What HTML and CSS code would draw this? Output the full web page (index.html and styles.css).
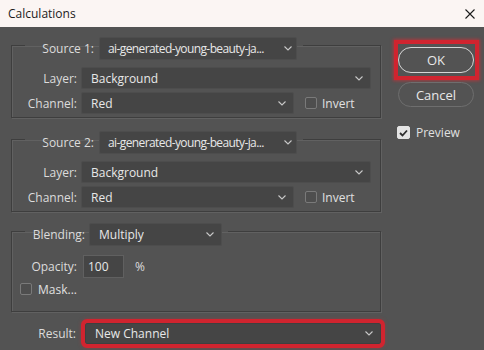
FILE: index.html
```html
<!DOCTYPE html>
<html>
<head>
<meta charset="utf-8">
<title>Calculations</title>
<link rel="stylesheet" href="styles.css">
</head>
<body>
<div class="titlebar">
  <span class="title">Calculations</span>
  <svg class="close" width="10" height="10" viewBox="0 0 10 10"><path d="M0.5 0.5 L9.5 9.5 M9.5 0.5 L0.5 9.5" stroke="#1b1b1b" stroke-width="1.1" fill="none"/></svg>
</div>
<div class="main">
  <div class="left">
    <fieldset class="group">
      <legend class="legend">
        <span class="lbl lbl-src">Source 1:</span>
        <div class="select sel-src"><span class="val">ai-generated-young-beauty-ja...</span><svg class="chev" width="8" height="5" viewBox="0 0 8 5"><path d="M0.5 0.5 L4 4 L7.5 0.5" stroke="#c9c9c9" stroke-width="1.1" fill="none"/></svg></div>
      </legend>
      <div class="row">
        <span class="lbl">Layer:</span>
        <div class="select sel-wide"><span class="val">Background</span><svg class="chev" width="8" height="5" viewBox="0 0 8 5"><path d="M0.5 0.5 L4 4 L7.5 0.5" stroke="#c9c9c9" stroke-width="1.1" fill="none"/></svg></div>
      </div>
      <div class="row">
        <span class="lbl">Channel:</span>
        <div class="select sel-ch"><span class="val">Red</span><svg class="chev" width="8" height="5" viewBox="0 0 8 5"><path d="M0.5 0.5 L4 4 L7.5 0.5" stroke="#c9c9c9" stroke-width="1.1" fill="none"/></svg></div>
        <span class="check inv"></span><span class="ctext">Invert</span>
      </div>
    </fieldset>
    <fieldset class="group">
      <legend class="legend">
        <span class="lbl lbl-src">Source 2:</span>
        <div class="select sel-src"><span class="val">ai-generated-young-beauty-ja...</span><svg class="chev" width="8" height="5" viewBox="0 0 8 5"><path d="M0.5 0.5 L4 4 L7.5 0.5" stroke="#c9c9c9" stroke-width="1.1" fill="none"/></svg></div>
      </legend>
      <div class="row">
        <span class="lbl">Layer:</span>
        <div class="select sel-wide"><span class="val">Background</span><svg class="chev" width="8" height="5" viewBox="0 0 8 5"><path d="M0.5 0.5 L4 4 L7.5 0.5" stroke="#c9c9c9" stroke-width="1.1" fill="none"/></svg></div>
      </div>
      <div class="row">
        <span class="lbl">Channel:</span>
        <div class="select sel-ch"><span class="val">Red</span><svg class="chev" width="8" height="5" viewBox="0 0 8 5"><path d="M0.5 0.5 L4 4 L7.5 0.5" stroke="#c9c9c9" stroke-width="1.1" fill="none"/></svg></div>
        <span class="check inv"></span><span class="ctext">Invert</span>
      </div>
    </fieldset>
    <fieldset class="group g3">
      <legend class="legend">
        <span class="lbl lbl-blend">Blending:</span>
        <div class="select sel-blend"><span class="val">Multiply</span><svg class="chev" width="8" height="5" viewBox="0 0 8 5"><path d="M0.5 0.5 L4 4 L7.5 0.5" stroke="#c9c9c9" stroke-width="1.1" fill="none"/></svg></div>
      </legend>
      <div class="row row-op">
        <span class="lbl">Opacity:</span>
        <div class="input">100</div>
        <span class="pct">%</span>
      </div>
      <div class="row row-mask">
        <span class="check mask"></span><span class="ctext">Mask...</span>
      </div>
    </fieldset>
    <div class="row row-result">
      <span class="lbl">Result:</span>
      <div class="select sel-result"><span class="val">New Channel</span><svg class="chev" width="8" height="5" viewBox="0 0 8 5"><path d="M0.5 0.5 L4 4 L7.5 0.5" stroke="#c9c9c9" stroke-width="1.1" fill="none"/></svg></div>
    </div>
  </div>
  <div class="right">
    <div class="okwrap"><div class="btn ok">OK</div></div>
    <div class="btn cancel">Cancel</div>
    <div class="preview"><span class="check checked"><svg width="9" height="8" viewBox="0 0 9 8"><path d="M1 4 L3.5 6.5 L8 1.5" stroke="#2e2e2e" stroke-width="1.8" fill="none"/></svg></span><span class="ctext">Preview</span></div>
  </div>
</div>
</body>
</html>
```

FILE: styles.css
```css
* { box-sizing: border-box; }
html, body { margin: 0; padding: 0; }
body {
  width: 484px;
  height: 350px;
  overflow: hidden;
  background: #535353;
  font-family: "Open Sans", "Noto Sans", sans-serif;
  font-size: 12px;
  color: #dcdcdc;
  white-space: nowrap;
}
.titlebar {
  height: 27px;
  background: #fbf5f3;
  display: flex;
  align-items: center;
  justify-content: space-between;
  padding: 0 9px 0 8px;
  color: #1b1b1b;
}
.title { font-size: 12px; }
.close { display: block; }

.main { display: flex; }
.left { width: 385px; padding-left: 11px; flex: none; }

.group {
  width: 370px;
  min-width: 0;
  margin: 4px 0 0 0;
  padding: 7px 8px 3px 0;
  border: 1px solid #3e3e3e;
  box-shadow: 1px 1px 0 #616161, inset 1px 1px 0 #616161;
}
.group + .group { margin-top: 7px; }
.g3 { margin-top: 5px !important; padding-top: 9px; padding-bottom: 15px; }

.legend {
  display: flex;
  align-items: center;
  padding: 6px 6px 0 0;
  margin-left: 13px;
}
.lbl { text-align: right; flex: none; }
.lbl-src { width: 69px; margin-right: 5px; }
.lbl-blend { width: 60px; margin-right: 4px; }

.select {
  height: 23px;
  background: #454545;
  border: 1px solid #4d4d4d;
  border-radius: 2px;
  display: flex;
  align-items: center;
  justify-content: space-between;
  padding: 0 7px 0 9px;
  color: #e8e8e8;
  flex: none;
}
.val { overflow: hidden; min-width: 0; }
.chev { flex: none; }
.sel-src { width: 198px; padding: 0 4px 0 8px; }
.sel-src .val { letter-spacing: -0.6px; overflow: visible; }
.sel-blend { width: 133px; }
.sel-wide { width: 290px; height: 22px; }
.sel-ch { width: 213px; height: 22px; }

.row { display: flex; align-items: center; height: 22px; }
.row + .row { margin-top: 3px; }
.row .lbl { width: 65px; margin-right: 4px; }

.check {
  width: 12px;
  height: 12px;
  border: 1px solid #7a7a7a;
  border-radius: 2px;
  background: #4e4e4e;
  flex: none;
  display: flex;
  align-items: center;
  justify-content: center;
}
.inv { margin-left: 11px; }
.ctext { margin-left: 5px; color: #e0e0e0; }

.row-op { height: 23px; }
.row-op .lbl { margin-right: 6px; }
.input {
  width: 41px;
  height: 23px;
  background: #454545;
  border: 1px solid #606060;
  padding-left: 4px;
  line-height: 21px;
  color: #e8e8e8;
}
.pct { margin-left: 11px; }
.row-mask { height: 14px; margin-top: 4px !important; }
.mask { margin-left: 8px; }
.row-mask .ctext { margin-left: 6px; }

.row-result { margin-top: 11px; height: 21px; }
.row-result .lbl { margin-right: 9px; }
.sel-result {
  width: 296px;
  height: 21px;
  outline: 4px solid #d0242f;
  box-shadow: 0 0 4px 3px rgba(220, 40, 50, 0.55);
  border-color: #3f3f3f;
}

.right { margin-left: 9px; display: flex; flex-direction: column; }
.okwrap {
  margin-top: 13px;
  width: 85px;
  border: 4px solid #d0242f;
  box-shadow: 0 0 3px 1px rgba(220, 40, 50, 0.6);
  padding: 3px 1px 3px 0;
}
.btn {
  width: 76px;
  height: 26px;
  border-radius: 13px;
  display: flex;
  align-items: center;
  justify-content: center;
  color: #e8e8e8;
  font-size: 13px;
}
.ok { border: 1.5px solid #d6d6d6; }
.cancel {
  margin: 2px 0 0 4px;
  height: 25px;
  border: 1px solid #6e6e6e;
}
.preview { display: flex; align-items: center; margin: 17px 0 0 3px; }
.checked { background: #e4e4e4; border-color: #e4e4e4; width: 13px; height: 13px; }
.preview .ctext { margin-left: 6px; }
```
